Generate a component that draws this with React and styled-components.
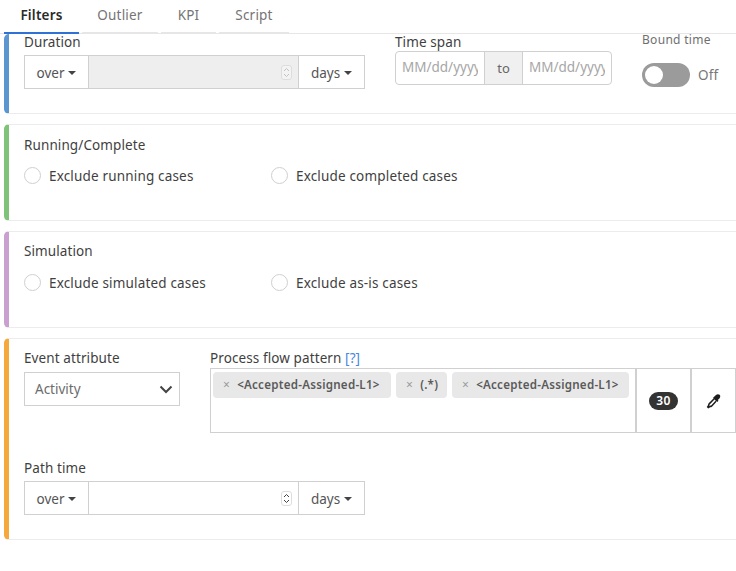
import React from "react";
import styled, { createGlobalStyle } from "styled-components";

const Global = createGlobalStyle`
  html, body { margin: 0; padding: 0; background: #fff; }
  body { font-family: "Noto Sans", "Open Sans", sans-serif; color: #3c3c3c; font-size: 14px; }
  * { box-sizing: border-box; }
`;
const Page = styled.div`width: 736px; height: 571px; overflow: hidden;`;
const Tabs = styled.div`display: flex; height: 34px; padding-left: 4px; border-bottom: 1px solid #e6e6e6; gap: 3px;`;
const Tab = styled.div`
  width: ${p => p.$w}px; height: 34px; display: flex; align-items: center; justify-content: center; padding-bottom: 2px;
  font-size: 13.5px; font-weight: ${p => p.$active ? 600 : 400}; color: ${p => p.$active ? "#2a2a2a" : "#747474"};
  letter-spacing: 0.2px;
  border-bottom: 2px solid ${p => p.$active ? "#2f72d6" : "#e6e6e6"};
`;
const Card = styled.section`
  display: flow-root;
  margin: 0 0 10px 4px; height: ${p => p.$h}px; border-left: 5px solid ${p => p.$color};
  border-radius: 5px 0 0 5px; border-bottom: 1px solid #ececec; border-top: ${p => p.$noTop ? "none" : "1px solid #ececec"};
  padding: ${p => p.$pad || "11px 0 0 15px"};
`;
const Row = styled.div`display: flex; margin-top: ${p => p.$mt || 0}px;`;
const Col = styled.div`width: ${p => p.$w}px; flex: none; margin-right: ${p => p.$mr || 0}px; margin-top: ${p => p.$mt || 0}px;`;
const Label = styled.div`font-size: 13.5px; line-height: 18px; color: #3f3f3f; letter-spacing: 0.1px; white-space: nowrap;`;
const SmallLabel = styled.div`font-size: 12px; line-height: 16px; margin-top: -1px; color: #6f6f6f; letter-spacing: 0.3px; white-space: nowrap;`;
const Help = styled.span`color: #4a86e0;`;
const Group = styled.div`display: flex; height: 34px; margin-top: ${p => p.$mt || 0}px; border: 1px solid #d0d0d0; border-radius: ${p => p.$r || 0}px; overflow: hidden;`;
const Drop = styled.div`
  width: ${p => p.$w}px; flex: none; display: flex; align-items: center; justify-content: center; gap: 4px; padding-top: 1px;
  font-size: 13.5px; color: #555;
  &::after { content: ""; border-left: 4px solid transparent; border-right: 4px solid transparent; border-top: 4px solid #444; margin-top: 1px; }
`;
const NumInput = styled.div`
  flex: 1; display: flex; align-items: center; justify-content: flex-end; padding-right: 6px;
  background: ${p => p.$off ? "#eeeeee" : "#fff"}; border-left: 1px solid #d0d0d0; border-right: 1px solid #d0d0d0;
`;
const Spin = styled.svg`display: block;`;
const DateField = styled.div`width: 88px; flex: none; padding: 0 6px; font-size: 13.5px; color: #a6a6a6; line-height: 31px;`;
const DateClip = styled.div`overflow: hidden; white-space: nowrap;`;
const To = styled.div`width: 39px; flex: none; background: #f0f0f0; border-left: 1px solid #d0d0d0; border-right: 1px solid #d0d0d0; display: flex; align-items: center; justify-content: center; font-size: 13px; color: #666;`;
const SwitchRow = styled.div`display: flex; align-items: center; gap: 8px; margin-top: 15px;`;
const Switch = styled.div`width: 48px; height: 24px; border-radius: 12px; background: #9b9b9b; padding: 3px;`;
const Knob = styled.div`width: 18px; height: 18px; border-radius: 50%; background: #fff;`;
const Off = styled.span`font-size: 13.5px; color: #777; letter-spacing: 0.2px;`;
const RadioRow = styled.div`display: flex; margin-top: ${p => p.$mt}px;`;
const RadioItem = styled.label`width: 247px; display: flex; align-items: center; gap: 8px; font-size: 13.5px; color: #3f3f3f; letter-spacing: 0.17px; white-space: nowrap;`;
const RadioText = styled.span`padding-top: 2px;`;
const Circle = styled.span`width: 17px; height: 17px; border-radius: 50%; border: 1px solid #cfcfcf; flex: none; background: #fff;`;
const Select = styled.div`
  height: 34px; margin-top: 5px; border: 1px solid #d0d0d0; display: flex; align-items: center; justify-content: space-between;
  padding: 0 6px 0 10px; font-size: 13.5px; color: #6c6c6c;
`;
const PatternWrap = styled.div`display: flex; height: 65px; margin-top: 1px;`;
const Pattern = styled.div`width: 426px; flex: none; border: 1px solid #d0d0d0; padding: 3px 2px; display: flex; gap: 5px; align-items: flex-start;`;
const Chip = styled.div`
  height: 26px; padding: 0 0 1px 10px; width: ${p => p.$w}px; flex: none; border-radius: 4px; background: #e8e8e8; display: flex; align-items: center; gap: 7px;
  font-size: 11.6px; font-weight: 600; color: #5a5a5a; white-space: nowrap; letter-spacing: 0.25px;
`;
const X = styled.span`color: #9a9a9a; font-size: 12px; font-weight: 400;`;
const Side = styled.div`width: ${p => p.$w}px; flex: none; border: 1px solid #d0d0d0; display: flex; align-items: center; justify-content: center;`;
const Badge = styled.span`background: #333; color: #fff; font-size: 12px; font-weight: 600; line-height: 18px; padding: 0 7px; border-radius: 9px; letter-spacing: 0.3px;`;

const Spinner = ({ off }) => (
  <Spin width="11" height="15" viewBox="0 0 11 15">
    <rect x="0.5" y="0.5" width="10" height="14" rx="2.5" fill={off ? "#f3f3f3" : "#fff"} stroke="#ddd" />
    <path d="M3 6l2.5-2.5L8 6M3 9l2.5 2.5L8 9" fill="none" stroke={off ? "#c2c2c2" : "#444"} strokeWidth="1" />
  </Spin>
);
const Chevron = () => (
  <svg width="14" height="9" viewBox="0 0 14 9"><path d="M1.5 1.5L7 7l5.5-5.5" fill="none" stroke="#444" strokeWidth="2" /></svg>
);
const Dropper = () => (
  <svg width="16" height="16" viewBox="0 0 16 16">
    <path d="M8.4 3.6l1.6-1.6c1-1 2.6-1.2 3.6-.2s.8 2.6-.2 3.6l-1.6 1.6.7.7-1.4 1.4L6.9 4.9 8.4 3.6z" fill="#1e1e1e" />
    <path d="M8 6L3.4 10.6c-.5.5-.7 1.1-.7 1.8l-1 1.6.6.6 1.6-1c.7 0 1.3-.2 1.8-.7L10 8.3" fill="none" stroke="#1e1e1e" strokeWidth="1.5" />
  </svg>
);
const OverGroup = ({ off, mt }) => (
  <Group $mt={mt}>
    <Drop $w={63}>over</Drop>
    <NumInput $off={off}><Spinner off={off} /></NumInput>
    <Drop $w={65}>days</Drop>
  </Group>
);
const DateBox = () => <DateField><DateClip>MM/dd/yyyy</DateClip></DateField>;

export default function App() {
  return (
    <Page>
      <Global />
      <Tabs>
        <Tab $w={75} $active>Filters</Tab>
        <Tab $w={76}>Outlier</Tab>
        <Tab $w={55}>KPI</Tab>
        <Tab $w={70}>Script</Tab>
      </Tabs>
      <Card $h={80} $color="#5b96d0" $noTop $pad="0 0 0 15px">
        <Row $mt={-1}>
          <Col $w={341} $mr={30}>
            <Label>Duration</Label>
            <OverGroup off mt={4} />
          </Col>
          <Col $w={217} $mr={30}>
            <Label>Time span</Label>
            <Group $r={4}>
              <DateBox />
              <To>to</To>
              <DateBox />
            </Group>
          </Col>
          <Col $w={90}>
            <SmallLabel>Bound time</SmallLabel>
            <SwitchRow><Switch><Knob /></Switch><Off>Off</Off></SwitchRow>
          </Col>
        </Row>
      </Card>
      <Card $h={97} $color="#7fc27a">
        <Label>Running/Complete</Label>
        <RadioRow $mt={11}>
          <RadioItem><Circle /><RadioText>Exclude running cases</RadioText></RadioItem>
          <RadioItem><Circle /><RadioText>Exclude completed cases</RadioText></RadioItem>
        </RadioRow>
      </Card>
      <Card $h={97} $color="#c9a0d0" $pad="10px 0 0 15px">
        <Label>Simulation</Label>
        <RadioRow $mt={12}>
          <RadioItem><Circle /><RadioText>Exclude simulated cases</RadioText></RadioItem>
          <RadioItem><Circle /><RadioText>Exclude as-is cases</RadioText></RadioItem>
        </RadioRow>
      </Card>
      <Card $h={202} $color="#f5a93c" $pad="10px 0 0 15px">
        <Row>
          <Col $w={156} $mr={30}>
            <Label>Event attribute</Label>
            <Select>Activity<Chevron /></Select>
          </Col>
          <Col $w={526}>
            <Label>Process flow pattern <Help>[?]</Help></Label>
            <PatternWrap>
              <Pattern>
                <Chip $w={178}><X>×</X>&lt;Accepted-Assigned-L1&gt;</Chip>
                <Chip $w={51}><X>×</X>(.*)</Chip>
                <Chip $w={177}><X>×</X>&lt;Accepted-Assigned-L1&gt;</Chip>
              </Pattern>
              <Side $w={55}><Badge>30</Badge></Side>
              <Side $w={45}><Dropper /></Side>
            </PatternWrap>
          </Col>
        </Row>
        <Col $w={341} $mt={26}>
          <Label>Path time</Label>
          <OverGroup mt={4} />
        </Col>
      </Card>
    </Page>
  );
}
